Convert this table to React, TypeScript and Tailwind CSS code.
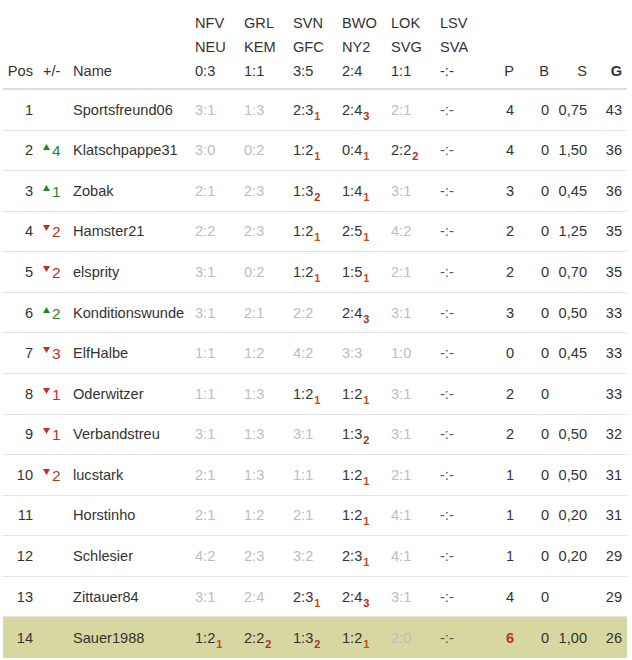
import React from "react";

type Cell = { s: string; g?: boolean; sub?: number };

type Row = {
  pos: number;
  d?: { up: boolean; n: number };
  name: string;
  cells: Cell[];
  p: string;
  pRed?: boolean;
  b: string;
  sc: string;
  g: string;
  hl?: boolean;
};

const g = (s: string): Cell => ({ s, g: true });
const k = (s: string, sub: number): Cell => ({ s, sub });
const n = (s: string): Cell => ({ s });

const rows: Row[] = [
  { pos: 1, name: "Sportsfreund06", cells: [g("3:1"), g("1:3"), k("2:3", 1), k("2:4", 3), g("2:1"), n("-:-")], p: "4", b: "0", sc: "0,75", g: "43" },
  { pos: 2, d: { up: true, n: 4 }, name: "Klatschpappe31", cells: [g("3:0"), g("0:2"), k("1:2", 1), k("0:4", 1), k("2:2", 2), n("-:-")], p: "4", b: "0", sc: "1,50", g: "36" },
  { pos: 3, d: { up: true, n: 1 }, name: "Zobak", cells: [g("2:1"), g("2:3"), k("1:3", 2), k("1:4", 1), g("3:1"), n("-:-")], p: "3", b: "0", sc: "0,45", g: "36" },
  { pos: 4, d: { up: false, n: 2 }, name: "Hamster21", cells: [g("2:2"), g("2:3"), k("1:2", 1), k("2:5", 1), g("4:2"), n("-:-")], p: "2", b: "0", sc: "1,25", g: "35" },
  { pos: 5, d: { up: false, n: 2 }, name: "elsprity", cells: [g("3:1"), g("0:2"), k("1:2", 1), k("1:5", 1), g("2:1"), n("-:-")], p: "2", b: "0", sc: "0,70", g: "35" },
  { pos: 6, d: { up: true, n: 2 }, name: "Konditionswunde", cells: [g("3:1"), g("2:1"), g("2:2"), k("2:4", 3), g("3:1"), n("-:-")], p: "3", b: "0", sc: "0,50", g: "33" },
  { pos: 7, d: { up: false, n: 3 }, name: "ElfHalbe", cells: [g("1:1"), g("1:2"), g("4:2"), g("3:3"), g("1:0"), n("-:-")], p: "0", b: "0", sc: "0,45", g: "33" },
  { pos: 8, d: { up: false, n: 1 }, name: "Oderwitzer", cells: [g("1:1"), g("1:3"), k("1:2", 1), k("1:2", 1), g("3:1"), n("-:-")], p: "2", b: "0", sc: "", g: "33" },
  { pos: 9, d: { up: false, n: 1 }, name: "Verbandstreu", cells: [g("3:1"), g("1:3"), g("3:1"), k("1:3", 2), g("3:1"), n("-:-")], p: "2", b: "0", sc: "0,50", g: "32" },
  { pos: 10, d: { up: false, n: 2 }, name: "lucstark", cells: [g("2:1"), g("1:3"), g("1:1"), k("1:2", 1), g("2:1"), n("-:-")], p: "1", b: "0", sc: "0,50", g: "31" },
  { pos: 11, name: "Horstinho", cells: [g("2:1"), g("1:2"), g("2:1"), k("1:2", 1), g("4:1"), n("-:-")], p: "1", b: "0", sc: "0,20", g: "31" },
  { pos: 12, name: "Schlesier", cells: [g("4:2"), g("2:3"), g("3:2"), k("2:3", 1), g("4:1"), n("-:-")], p: "1", b: "0", sc: "0,20", g: "29" },
  { pos: 13, name: "Zittauer84", cells: [g("3:1"), g("2:4"), k("2:3", 1), k("2:4", 3), g("3:1"), n("-:-")], p: "4", b: "0", sc: "", g: "29" },
  { pos: 14, name: "Sauer1988", cells: [k("1:2", 1), k("2:2", 2), k("1:3", 2), k("1:2", 1), g("2:0"), n("-:-")], p: "6", pRed: true, b: "0", sc: "1,00", g: "26", hl: true },
];

const heads: [string, string, string][] = [
  ["NFV", "NEU", "0:3"],
  ["GRL", "KEM", "1:1"],
  ["SVN", "GFC", "3:5"],
  ["BWO", "NY2", "2:4"],
  ["LOK", "SVG", "1:1"],
  ["LSV", "SVA", "-:-"],
];

const grid =
  "grid grid-cols-[35px_30px_122px_49px_49px_49px_49px_49px_49px_35px_35px_38px_35px]";

function Sub({ v }: { v: number }) {
  const c =
    v === 1 ? "text-[#d04a0e]" : v === 2 ? "text-[#b3301a]" : "text-[#c41e24]";
  return (
    <span className={`${c} text-[11px] font-bold relative top-[5px] ml-[1px] leading-none`}>{v}</span>
  );
}

function Delta({ up, n }: { up: boolean; n: number }) {
  return (
    <span className={`inline-flex items-start ${up ? "text-[#2a8a2a]" : "text-[#c0301f]"}`}>
      <svg width="7" height="6" viewBox="0 0 7 6" className="mt-[5px] mr-[2px]">
        {up ? (
          <polygon points="3.5,0 7,6 0,6" fill="#1f8a1f" />
        ) : (
          <polygon points="0,0 7,0 3.5,6" fill="#c0301f" />
        )}
      </svg>
      <span className="text-[15.5px] leading-[20px] pt-[2px]">{n}</span>
    </span>
  );
}

export default function App() {
  return (
    <div
      className="w-[632px] h-[660px] bg-white overflow-hidden text-[#333] text-[14.6px]"
      style={{ fontFamily: '"Liberation Sans", Arial, sans-serif' }}
    >
      <div className="ml-[3px] w-[624px]">
        <div className={`${grid} h-[90px] border-b-2 border-[#dcdcdc] leading-[24px] pb-[5px] items-end`}>
          <div className="text-right pr-[5px]">Pos</div>
          <div className="pl-[5px]">+/-</div>
          <div className="pl-[5px]">Name</div>
          {heads.map((h, i) => (
            <div key={i} className="pl-[5px] flex flex-col">
              <span>{h[0]}</span>
              <span>{h[1]}</span>
              <span>{h[2]}</span>
            </div>
          ))}
          <div className="text-right pr-[5px]">P</div>
          <div className="text-right pr-[5px]">B</div>
          <div className="text-right pr-[5px]">S</div>
          <div className="text-right pr-[5px] font-bold">G</div>
        </div>
        {rows.map((r) => (
          <div
            key={r.pos}
            className={`${grid} h-[40.57px] items-center leading-[20px] ${
              r.hl ? "bg-[#d7d7a2]" : "border-b border-[#e3e3e3]"
            }`}
          >
            <div className="text-right pr-[5px]">{r.pos}</div>
            <div className="pl-[5px] flex">{r.d ? <Delta up={r.d.up} n={r.d.n} /> : null}</div>
            <div className="pl-[5px] whitespace-nowrap">{r.name}</div>
            {r.cells.map((c, i) => (
              <div
                key={i}
                className={`pl-[5px] whitespace-nowrap ${c.g ? "text-[#bdbdbd]" : c.s === "-:-" ? "text-[#555]" : "text-[#333]"}`}
              >
                {c.s}
                {c.sub ? <Sub v={c.sub} /> : null}
              </div>
            ))}
            <div className={`text-right pr-[5px] ${r.pRed ? "text-[#c0301f] font-bold" : ""}`}>{r.p}</div>
            <div className="text-right pr-[5px]">{r.b}</div>
            <div className="text-right pr-[5px]">{r.sc}</div>
            <div className="text-right pr-[5px]">{r.g}</div>
          </div>
        ))}
      </div>
    </div>
  );
}
